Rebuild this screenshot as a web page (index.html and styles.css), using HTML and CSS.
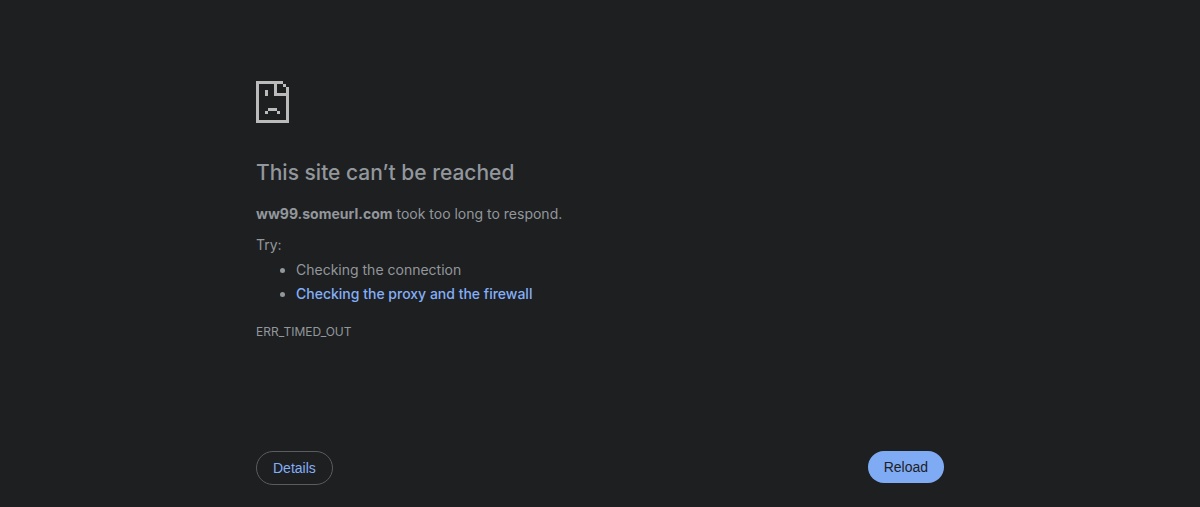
FILE: index.html
```html
<!DOCTYPE html>
<html lang="en">
<head>
<meta charset="utf-8">
<meta name="viewport" content="width=device-width, initial-scale=1">
<title>ww99.someurl.com</title>
<link rel="stylesheet" href="styles.css">
</head>
<body>
<main class="error-page">
  <svg class="error-icon" viewBox="0 0 11 14" shape-rendering="crispEdges" aria-hidden="true">
    <path fill-rule="evenodd" d="M0 0H9V1H10V2H11V14H0ZM1 1V13H10V5H6V1ZM7 1V4H10V2H9V1ZM3 3H4V5H3ZM4 9H7V10H4ZM3 10H4V11H3ZM7 10H8V11H7Z"/>
  </svg>
  <h1 class="title">This site can’t be reached</h1>
  <p class="summary"><strong>ww99.someurl.com</strong> took too long to respond.</p>
  <div class="suggestions">
    <p class="suggestions-label">Try:</p>
    <ul class="suggestions-list">
      <li>Checking the connection</li>
      <li><a class="link" href="#buttons">Checking the proxy and the firewall</a></li>
    </ul>
  </div>
  <p class="error-code">ERR_TIMED_OUT</p>
  <div class="buttons" id="buttons">
    <button class="button button-secondary" type="button">Details</button>
    <button class="button button-primary" type="button">Reload</button>
  </div>
</main>
</body>
</html>
```
FILE: styles.css
```css
* { box-sizing: border-box; }
body {
  margin: 0;
  background: #1e1f21;
  color: #92979c;
  font: 14px/24px Inter, "Liberation Sans", sans-serif;
}
.error-page {
  max-width: 688px;
  margin: 0 auto;
  padding-top: 81px;
}
.error-icon {
  display: block;
  width: 33px;
  height: 42px;
  fill: #bbbbbb;
}
.title {
  margin: 36px 0 15px;
  font-size: 21px;
  line-height: 28px;
  font-weight: 500;
}
.summary { margin: 0 0 7px; }
.suggestions-label { margin: 0; }
.suggestions-list {
  margin: 0;
  padding: 1px 0 0 40px;
}
.link {
  color: #84aff8;
  font-weight: 500;
  text-decoration: none;
}
.error-code {
  margin: 14px 0 0;
  font-size: 12px;
}
.buttons {
  display: flex;
  justify-content: space-between;
  align-items: flex-start;
  margin-top: 107px;
}
.button {
  border-radius: 20px;
  padding: 8px 16px;
  font: 14px/16px "Liberation Sans", Arial, sans-serif;
  cursor: pointer;
}
.button-secondary {
  border: 1px solid #5a5c60;
  background: transparent;
  color: #84aff8;
}
.button-primary {
  border: 0;
  background: #7fabf4;
  color: #202124;
}
```
